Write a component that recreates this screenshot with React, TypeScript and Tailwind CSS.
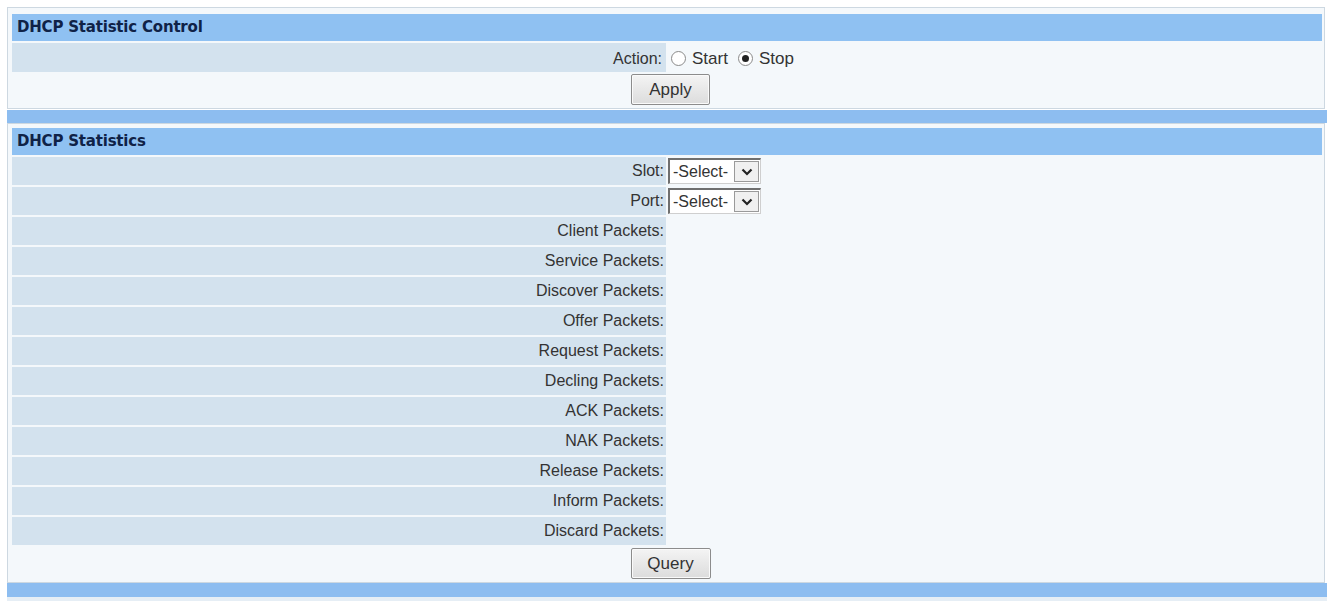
import React from 'react';

const STAT_ROWS = [
  'Client Packets:',
  'Service Packets:',
  'Discover Packets:',
  'Offer Packets:',
  'Request Packets:',
  'Decling Packets:',
  'ACK Packets:',
  'NAK Packets:',
  'Release Packets:',
  'Inform Packets:',
  'Discard Packets:',
];

function Header({ title }: { title: string }) {
  return (
    <div className="h-[27px] bg-[#8fc1f2] flex items-center pl-[5px] text-[15px] font-bold text-[#0f2247] font-['DejaVu_Sans',sans-serif] tracking-[-0.2px]">
      {title}
    </div>
  );
}

function Radio({ checked }: { checked?: boolean }) {
  return (
    <span className="inline-flex w-[15px] h-[15px] rounded-full border border-[#8a8a8a] bg-white items-center justify-center">
      {checked && <span className="w-[7px] h-[7px] rounded-full bg-[#222]" />}
    </span>
  );
}

function Select() {
  return (
    <div className="flex h-[26px] w-[93px] border-t-2 border-l-2 border-[#6f6f6f] border-r border-b border-r-[#cfcfcf] border-b-[#cfcfcf] bg-white">
      <span className="flex-1 flex items-center pl-[3px] text-[16px] text-[#333]">-Select-</span>
      <span className="w-[25px] h-[21px] mt-[1px] mr-[1px] border border-[#9a9a9a] bg-[#f0f0f0] flex items-center justify-center">
        <svg width="12" height="8" viewBox="0 0 12 8">
          <path d="M1.5 1.5 L6 6 L10.5 1.5" fill="none" stroke="#222" strokeWidth="2.2" />
        </svg>
      </span>
    </div>
  );
}

function Button({ label, w, h }: { label: string; w: string; h: string }) {
  return (
    <button className={`${w} ${h} border border-[#8c8c8c] rounded-[2px] bg-gradient-to-b from-[#f4f4f4] to-[#dcdcdc] text-[17px] text-[#333] shadow-[inset_0_0_0_1px_#fafafa]`}>
      {label}
    </button>
  );
}

function Row({ label, children }: { label: string; children?: React.ReactNode }) {
  return (
    <div className="grid grid-cols-[654px_1fr] gap-x-[2px] h-[28px]">
      <div className="bg-[#d3e2ee] flex items-center justify-end pr-[2px] text-[#333]">{label}</div>
      <div className="bg-[#f4f8fb] flex items-center">{children}</div>
    </div>
  );
}

export default function App() {
  return (
    <div className="w-[1331px] h-[601px] bg-white pt-[7px] pl-[7px] font-['Liberation_Sans',Arial,sans-serif] text-[16px]">
      <div className="w-[1320px]">
        {/* control box */}
        <div className="border border-[#cdd8e1] bg-[#f4f8fb] pt-[6px] pl-[4px] pr-[2px] pb-[2px] mr-[2px]">
          <Header title="DHCP Statistic Control" />
          <div className="flex flex-col gap-y-[2px] mt-[2px]">
            <div className="grid grid-cols-[654px_1fr] h-[28px]">
              <div className="bg-[#d3e2ee] flex items-center justify-end pr-[4px] pt-[3px] text-[#333]">Action:</div>
              <div className="bg-[#f4f8fb] flex items-center gap-[6px] pl-[5px] pt-[3px] text-[17px] text-[#333]">
                <Radio />
                <span className="mr-[4px]">Start</span>
                <Radio checked />
                <span>Stop</span>
              </div>
            </div>
            <div className="h-[33px] flex items-center justify-center pl-[7px]">
              <Button label="Apply" w="w-[79px]" h="h-[31px]" />
            </div>
          </div>
        </div>
        <div className="h-[13px] bg-[#8dbdf0] mt-[1px]" />

        {/* statistics box */}
        <div className="border border-[#cdd8e1] bg-[#f4f8fb] pt-[4px] pl-[4px] pr-[2px] pb-[2px] mr-[2px]">
          <Header title="DHCP Statistics" />
          <div className="flex flex-col gap-y-[2px] mt-[2px]">
            <Row label="Slot:"><Select /></Row>
            <Row label="Port:"><Select /></Row>
            {STAT_ROWS.map(r => <Row key={r} label={r} />)}
            <div className="h-[33px] flex items-center justify-center pl-[7px]">
              <Button label="Query" w="w-[80px]" h="h-[31px]" />
            </div>
          </div>
        </div>
        <div className="h-[14px] bg-[#8dbdf0]" />
        <div className="h-[4px] bg-[#e6eef5]" />
      </div>
    </div>
  );
}
